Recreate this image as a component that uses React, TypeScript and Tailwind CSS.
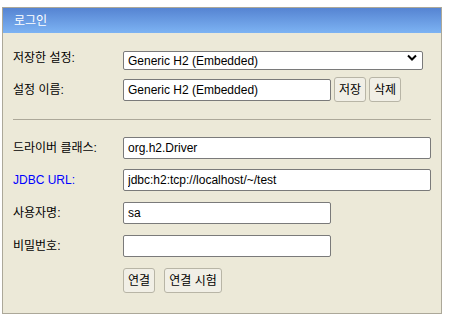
import React from "react";

const label = "w-[110px] shrink-0 text-[12px] text-black";
const field =
  "h-[22px] border border-[#7a7a7a] rounded-[2px] bg-white px-[4px] text-[12px] text-black outline-none";
const btn =
  "h-[25px] border border-[#b8b5a6] rounded-[3px] bg-[#f1efe6] px-[3px] text-[12px] text-black leading-none";

export default function App() {
  return (
    <div
      className="w-[458px] h-[330px] bg-white pt-[7px] pl-[2px]"
      style={{ fontFamily: '"Liberation Sans", "Noto Sans CJK KR", sans-serif' }}
    >
      <div className="w-[440px] h-[307px] border border-[#aca899] bg-[#ece9d8] flex flex-col">
        <div className="h-[25px] bg-gradient-to-b from-[#5684d2] to-[#7db3f3] flex items-center px-[11px] text-white text-[12px]">
          로그인
        </div>

        <div className="flex flex-col px-[10px] pt-[15px]">
          <div className="flex items-center h-[19px]">
            <span className={label}>저장한 설정:</span>
            <div className="relative w-[300px] h-[19px]">
              <select
                defaultValue="Generic H2 (Embedded)"
                className="appearance-none w-full h-full border border-[#7a7a7a] rounded-[2px] bg-white pl-[4px] text-[12px] text-black outline-none"
              >
                <option>Generic H2 (Embedded)</option>
                <option>Generic H2 (Server)</option>
              </select>
              <svg
                className="absolute right-[6px] top-[6px] pointer-events-none"
                width="10"
                height="7"
                viewBox="0 0 10 7"
              >
                <path d="M1 1.5 L5 5.5 L9 1.5" fill="none" stroke="#000" strokeWidth="2" />
              </svg>
            </div>
          </div>

          <div className="flex items-center mt-[10px] h-[25px]">
            <span className={label}>설정 이름:</span>
            <input className={`${field} w-[208px]`} defaultValue="Generic H2 (Embedded)" />
            <button className={`${btn} ml-[3px] w-[32px]`}>저장</button>
            <button className={`${btn} ml-[3px] w-[32px]`}>삭제</button>
          </div>

          <div className="mt-[17px] h-px bg-[#aca899]" />

          <div className="flex items-center mt-[17px]">
            <span className={label}>드라이버 클래스:</span>
            <input className={`${field} w-[308px]`} defaultValue="org.h2.Driver" />
          </div>

          <div className="flex items-center mt-[10px]">
            <span className={`${label} !text-[#0000ff]`}>JDBC URL:</span>
            <input className={`${field} w-[308px]`} defaultValue="jdbc:h2:tcp://localhost/~/test" />
          </div>

          <div className="flex items-center mt-[11px]">
            <span className={label}>사용자명:</span>
            <input className={`${field} w-[208px]`} defaultValue="sa" />
          </div>

          <div className="flex items-center mt-[11px]">
            <span className={label}>비밀번호:</span>
            <input className={`${field} w-[208px]`} type="password" defaultValue="" />
          </div>

          <div className="flex items-center mt-[11px] pl-[110px] gap-[9px]">
            <button className={`${btn} w-[32px]`}>연결</button>
            <button className={`${btn} w-[58px]`}>연결 시험</button>
          </div>
        </div>
      </div>
    </div>
  );
}
